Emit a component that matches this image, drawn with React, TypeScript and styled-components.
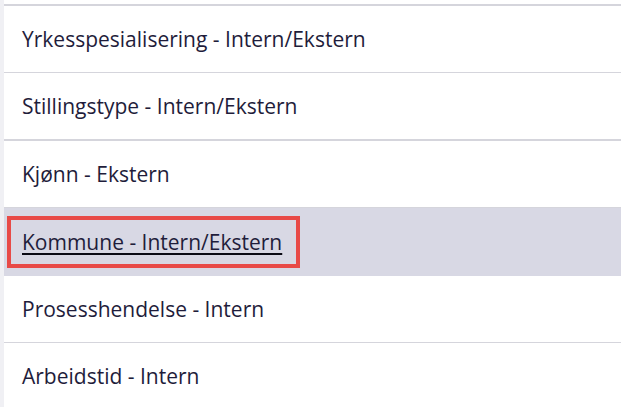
import React from "react";
import styled, { createGlobalStyle } from "styled-components";

const Global = createGlobalStyle`
  html, body { margin: 0; padding: 0; background: #ffffff; }
  body { font-family: "Open Sans", "Noto Sans", sans-serif; }
`;

const Page = styled.div`
  display: flex;
  width: 621px;
  height: 407px;
  overflow: hidden;
  background: #ffffff;
`;

const Rail = styled.div`
  width: 4px;
  flex: none;
  background: #f0f0f4;
`;

const List = styled.ul`
  list-style: none;
  margin: 0;
  padding: 4px 0 0 0;
  flex: 1;
`;

const TopRule = styled.li`
  height: 2px;
  background: #d5d5dc;
`;

const Row = styled.li<{ $selected?: boolean; $thick?: boolean; $last?: boolean }>`
  display: flex;
  align-items: center;
  height: ${(p) => (p.$selected ? 68 : 66)}px;
  padding-left: 18px;
  background: ${(p) => (p.$selected ? "#d8d8e4" : "#ffffff")};
  border-bottom: ${(p) =>
    p.$last || p.$selected ? "0" : p.$thick ? "2px solid #d5d5dc" : "1px solid #d5d5dc"};
`;

const Label = styled.a<{ $focus?: boolean }>`
  font-size: 21px;
  color: #1f1d3b;
  text-decoration: ${(p) => (p.$focus ? "underline" : "none")};
  text-underline-offset: 3px;
  text-decoration-thickness: 2px;
  text-decoration-color: #0a0a14;
  ${(p) =>
    p.$focus
      ? `
    margin-left: -15px;
    padding: 8px 14px 8px 11px;
    border: 4px solid #e84a47;
  `
      : ""}
`;

const items = [
  { text: "Yrkesspesialisering - Intern/Ekstern" },
  { text: "Stillingstype - Intern/Ekstern", thick: true },
  { text: "Kjønn - Ekstern" },
  { text: "Kommune - Intern/Ekstern", selected: true },
  { text: "Prosesshendelse - Intern" },
  { text: "Arbeidstid - Intern", last: true },
];

export default function App() {
  return (
    <Page>
      <Global />
      <Rail />
      <List>
        <TopRule />
        {items.map((it) => (
          <Row key={it.text} $selected={it.selected} $thick={it.thick} $last={it.last}>
            <Label $focus={it.selected}>{it.text}</Label>
          </Row>
        ))}
      </List>
    </Page>
  );
}
